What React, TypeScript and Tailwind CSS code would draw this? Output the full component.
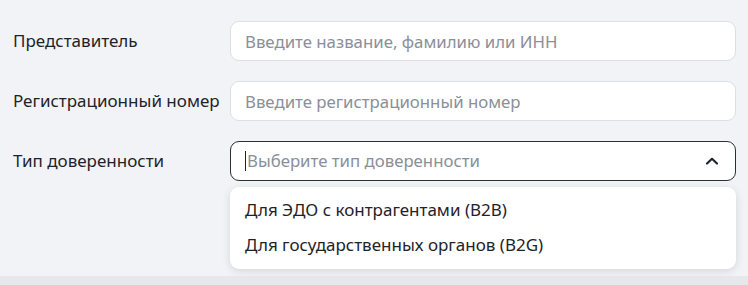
import React from 'react';

const font = { fontFamily: '"Noto Sans", "Open Sans", sans-serif' };

const Field: React.FC<{ label: string; placeholder: string }> = ({ label, placeholder }) => (
  <div className="flex items-center">
    <label className="w-[217px] shrink-0 text-[17px] text-[#1f2329]">{label}</label>
    <input
      type="text"
      placeholder={placeholder}
      className="h-[40px] w-[506px] rounded-[9px] border border-[#dcdfe5] bg-white px-[14px] text-[16.8px] text-[#1f2329] outline-none placeholder:text-[#8a8f99]"
      style={font}
    />
  </div>
);

const App: React.FC = () => {
  const options = ['Для ЭДО с контрагентами (B2B)', 'Для государственных органов (B2G)'];

  return (
    <div className="h-[285px] w-full bg-[#e6e8eb]" style={font}>
      <div className="flex h-[276px] flex-col gap-[20px] bg-[#f2f3f6] pl-[13px] pt-[21px]">
        <Field label="Представитель" placeholder="Введите название, фамилию или ИНН" />
        <Field label="Регистрационный номер" placeholder="Введите регистрационный номер" />

        <div className="flex items-center">
          <label className="w-[217px] shrink-0 text-[17px] text-[#1f2329]">Тип доверенности</label>
          <div className="relative w-[506px]">
            <div className="flex h-[40px] items-center rounded-[9px] border border-[#2b2f36] bg-white pl-[14px] pr-[15px]">
              <span className="mr-[1px] h-[20px] w-px bg-[#1f2329]" />
              <span className="flex-1 text-[16.8px] text-[#8a8f99]">Выберите тип доверенности</span>
              <svg width="16" height="14" viewBox="0 0 16 14" fill="none">
                <path d="M3 9.5 L8 4.8 L13 9.5" stroke="#1f2329" strokeWidth="2.2" strokeLinecap="round" strokeLinejoin="round" />
              </svg>
            </div>
            <ul className="absolute left-0 top-[46px] w-full rounded-[9px] bg-white pb-[7px] pt-[5px] shadow-[0_2px_8px_rgba(0,0,0,0.12)]">
              {options.map((o) => (
                <li key={o} className="flex h-[35px] items-center px-[15px] text-[17px] text-[#1f2329]">
                  {o}
                </li>
              ))}
            </ul>
          </div>
        </div>
      </div>
    </div>
  );
};

export default App;
